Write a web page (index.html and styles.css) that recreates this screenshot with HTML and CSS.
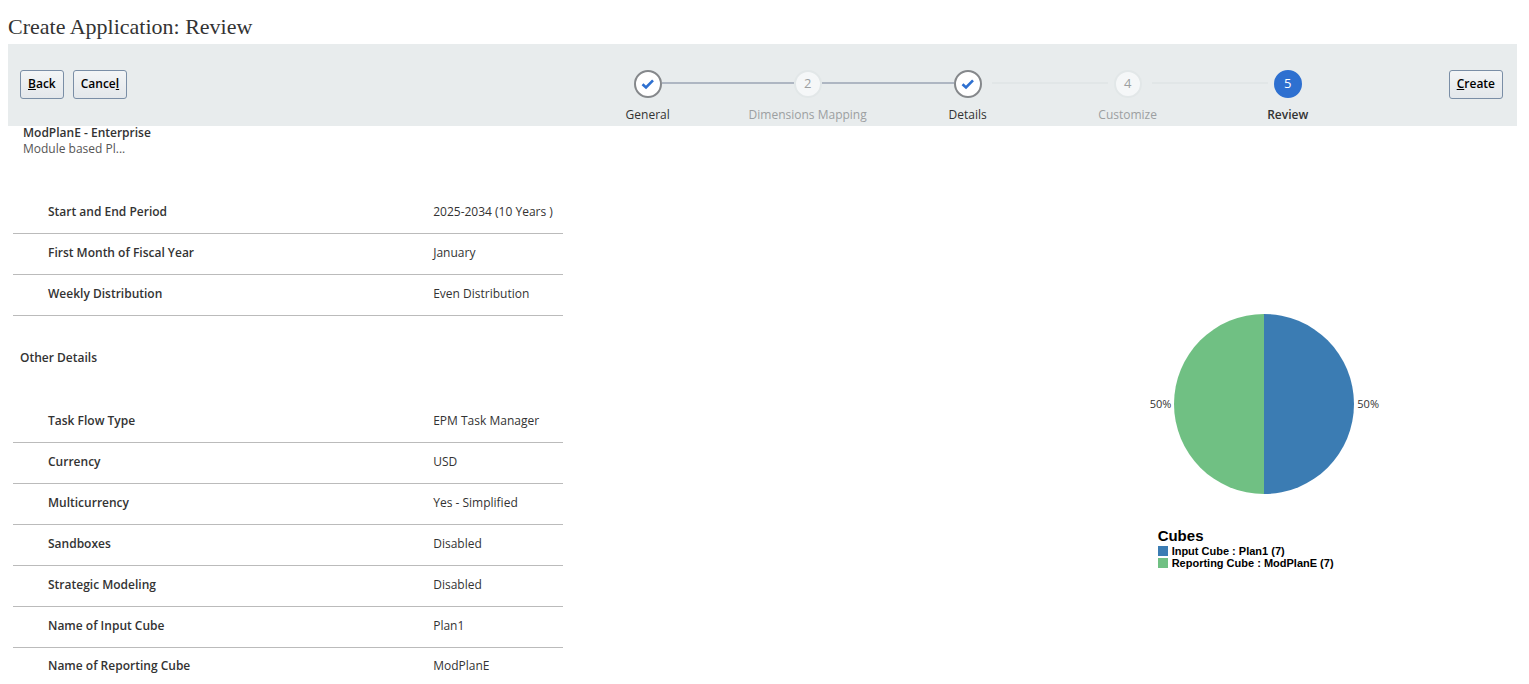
FILE: index.html
```html
<!DOCTYPE html>
<html lang="en">

<head>
	<meta charset="UTF-8" />
	<title>Create Application: Review</title>
	<link rel="stylesheet" href="styles.css">
</head>

<body>
	<h1 class="page-title">Create Application: Review</h1>

	<!-- buttons and train steps -->
	<header class="toolbar">
		<div class="buttons">
			<button class="button" type="button" accesskey="b"><u>B</u>ack</button>
			<button class="button" type="button" accesskey="l">Cance<u>l</u></button>
		</div>
		<ol class="train">
			<li class="step done">
				<span class="dot">
					<svg width="14" height="12" viewBox="0 0 14 12"><path d="M1.5 6.2 L5 9.5 L12 2.3" fill="none" stroke="#2e70d0" stroke-width="2.6" /></svg>
				</span>
				<span class="step-label">General</span>
			</li>
			<li class="step disabled passed">
				<span class="dot">2</span>
				<span class="step-label">Dimensions Mapping</span>
			</li>
			<li class="step done passed">
				<span class="dot">
					<svg width="14" height="12" viewBox="0 0 14 12"><path d="M1.5 6.2 L5 9.5 L12 2.3" fill="none" stroke="#2e70d0" stroke-width="2.6" /></svg>
				</span>
				<span class="step-label">Details</span>
			</li>
			<li class="step disabled">
				<span class="dot">4</span>
				<span class="step-label">Customize</span>
			</li>
			<li class="step current" aria-current="step">
				<span class="dot">5</span>
				<span class="step-label">Review</span>
			</li>
		</ol>
		<button class="button" type="button" accesskey="c"><u>C</u>reate</button>
	</header>

	<main class="content">
		<section class="details">
			<div class="app-info">
				<h2 class="app-name">ModPlanE - Enterprise</h2>
				<p class="app-desc">Module based Pl...</p>
			</div>

			<table class="props">
				<tr><th scope="row">Start and End Period</th><td>2025-2034 (10 Years )</td></tr>
				<tr><th scope="row">First Month of Fiscal Year</th><td>January</td></tr>
				<tr><th scope="row">Weekly Distribution</th><td>Even Distribution</td></tr>
			</table>

			<h2 class="section-title">Other Details</h2>

			<table class="props other">
				<tr><th scope="row">Task Flow Type</th><td>EPM Task Manager</td></tr>
				<tr><th scope="row">Currency</th><td>USD</td></tr>
				<tr><th scope="row">Multicurrency</th><td>Yes - Simplified</td></tr>
				<tr><th scope="row">Sandboxes</th><td>Disabled</td></tr>
				<tr><th scope="row">Strategic Modeling</th><td>Disabled</td></tr>
				<tr><th scope="row">Name of Input Cube</th><td>Plan1</td></tr>
				<tr><th scope="row">Name of Reporting Cube</th><td>ModPlanE</td></tr>
			</table>
		</section>

		<!-- cubes pie chart -->
		<section class="chart">
			<div class="pie">
				<span>50%</span>
				<svg width="180" height="180" viewBox="0 0 180 180">
					<path d="M90 0 A90 90 0 0 0 90 180 Z" fill="#70c083" />
					<path d="M90 0 A90 90 0 0 1 90 180 Z" fill="#3b7cb3" />
				</svg>
				<span>50%</span>
			</div>
			<div class="legend">
				<h3 class="legend-title">Cubes</h3>
				<ul class="legend-items">
					<li><i class="swatch input"></i>Input Cube : Plan1 (7)</li>
					<li><i class="swatch reporting"></i>Reporting Cube : ModPlanE (7)</li>
				</ul>
			</div>
		</section>
	</main>
</body>

</html>
```

FILE: styles.css
```css
* {
	box-sizing: border-box;
}

body {
	margin: 0;
	padding: 12px 12px 0 8px;
	font-family: "Open Sans", "Noto Sans", sans-serif;
	font-size: 12px;
	line-height: 16px;
	color: #333;
	background-color: #fff;
}

h1,
h2,
h3,
p,
ul,
ol {
	margin: 0;
	padding: 0;
}

.page-title {
	font-family: Georgia, "Liberation Serif", serif;
	font-size: 22px;
	font-weight: normal;
	line-height: 30px;
	padding-bottom: 2px;
}

.toolbar {
	display: flex;
	align-items: flex-start;
	height: 82px;
	padding: 26px 14px 0 12px;
	background-color: #e8eced;
}

.buttons {
	display: flex;
	gap: 9px;
}

.button {
	height: 29px;
	padding: 0 7px 2px;
	border: 1px solid #7a8ea6;
	border-radius: 3px;
	background: linear-gradient(#f3f5f6, #e3e7eb);
	color: #000;
	font-family: inherit;
	font-size: 12px;
	font-weight: 600;
}

/* train */
.train {
	display: flex;
	margin-left: auto;
	margin-right: 81px;
	list-style-type: none;
}

.step {
	position: relative;
	display: flex;
	flex-direction: column;
	align-items: center;
	gap: 9px;
	width: 160px;
}

.step + .step::before {
	content: "";
	position: absolute;
	top: 12px;
	left: -56px;
	width: 116px;
	height: 2px;
	background-color: #e1e6e7;
}

.step.passed::before {
	left: -66px;
	width: 132px;
	background-color: #aeb6c2;
}

.dot {
	display: flex;
	align-items: center;
	justify-content: center;
	width: 28px;
	height: 28px;
	border: 2px solid #e2e7e8;
	border-radius: 50%;
	background-color: #f5f7f8;
	font-size: 13px;
	padding-bottom: 2px;
}

.done .dot {
	border-color: #85888b;
	background-color: #fff;
	padding-bottom: 0;
}

.current .dot {
	border-color: #2e70d0;
	background-color: #2e70d0;
	color: #fff;
}

.disabled {
	color: #9c9fa1;
}

.current .step-label {
	font-weight: 600;
}

/* details */
.content {
	display: flex;
	align-items: flex-start;
	justify-content: space-between;
}

.details {
	width: 36.8%;
	padding-left: 5px;
}

.app-info {
	padding: 0 10px;
}

.app-name,
.section-title {
	font-size: 12px;
	font-weight: 600;
	line-height: 16px;
}

.app-name {
	line-height: 14px;
}

.app-desc {
	color: #555;
	line-height: 18px;
}

.props {
	width: 100%;
	margin-top: 35px;
	border-spacing: 0;
	table-layout: fixed;
}

.props th,
.props td {
	height: 41px;
	padding: 0 0 3px 35px;
	border-bottom: 1px solid #bbb;
	text-align: left;
}

.props th {
	width: 70%;
	font-weight: 600;
}

.props td {
	white-space: nowrap;
}

.section-title {
	padding: 34px 7px 0;
}

.props.other {
	margin-top: 36px;
}

.props.other tr:last-child th,
.props.other tr:last-child td {
	height: 36px;
	padding-bottom: 0;
	border-bottom: none;
}

/* chart */
.chart {
	margin: 188px 138px 0 0;
	color: #000;
	font-family: Arial, "Liberation Sans", sans-serif;
	font-size: 11px;
}

.pie {
	display: flex;
	align-items: center;
	gap: 3px;
	font-family: "Open Sans", "Noto Sans", sans-serif;
	color: #333;
}

.legend {
	padding: 33px 0 0 8px;
	font-weight: bold;
}

.legend-title {
	font-size: 15px;
	line-height: 18px;
}

.legend-items {
	list-style-type: none;
	line-height: 12px;
}

.legend-items li {
	display: flex;
	align-items: center;
	gap: 4px;
}

.swatch {
	width: 10px;
	height: 10px;
}

.input {
	background-color: #3b7cb3;
}

.reporting {
	background-color: #70c083;
}
```
